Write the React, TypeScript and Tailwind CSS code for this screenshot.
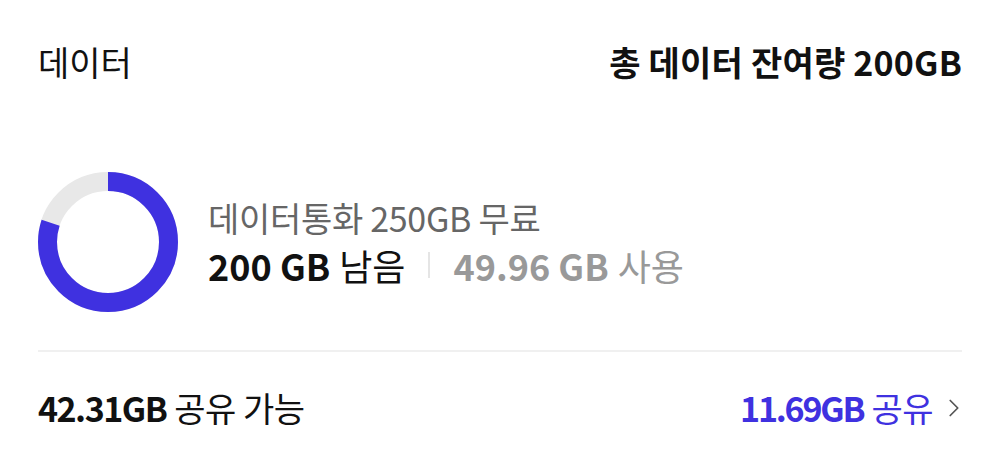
import { ChevronRight } from "lucide-react";

const font = { fontFamily: '"Noto Sans CJK KR", "Noto Sans", sans-serif' };

function Donut({ used, total }: { used: number; total: number }) {
  const r = 60.5;
  const c = 2 * Math.PI * r;
  const remain = (total - used) / total;
  return (
    <svg width="140" height="140" viewBox="0 0 140 140" className="shrink-0">
      <circle cx="70" cy="70" r={r} fill="none" stroke="#e8e8e8" strokeWidth="19" />
      <circle
        cx="70"
        cy="70"
        r={r}
        fill="none"
        stroke="#3f31e0"
        strokeWidth="19"
        strokeDasharray={`${c * remain} ${c}`}
        transform="rotate(-90 70 70)"
      />
    </svg>
  );
}

export default function App() {
  return (
    <div className="w-[1000px] h-[470px] bg-white px-[38px] text-[#111]" style={font}>
      <div className="flex items-center justify-between pt-[32px] h-[92px]">
        <div className="text-[34px] leading-none">데이터</div>
        <div className="text-[34px] font-bold leading-none tracking-[0.2px]">총 데이터 잔여량 200GB</div>
      </div>

      <div className="flex items-center mt-[80px] h-[140px]">
        <Donut used={49.96} total={250} />
        <div className="ml-[30px] flex flex-col gap-[12px]">
          <div className="text-[34px] leading-none text-[#666] tracking-[-0.3px]">데이터통화 250GB 무료</div>
          <div className="flex items-center text-[36px] leading-none">
            <span className="font-bold">200 GB</span>
            <span className="ml-[9px]">남음</span>
            <span className="mx-[23px] h-[26px] w-[2px] bg-[#e5e5e5]" />
            <span className="font-bold text-[#999]">49.96 GB</span>
            <span className="ml-[9px] text-[#999]">사용</span>
          </div>
        </div>
      </div>

      <div className="mt-[38px] h-[2px] bg-[#f0f0f0]" />

      <div className="flex items-center justify-between h-[112px]">
        <div className="text-[34px] leading-none">
          <span className="font-bold tracking-[-1.5px]">42.31GB</span>
          <span className="ml-[8px] tracking-[-0.5px]">공유 가능</span>
        </div>
        <div className="flex items-center text-[34px] leading-none text-[#3f31e0]">
          <span className="font-bold tracking-[-2.2px]">11.69GB</span>
          <span className="ml-[8px] tracking-[-0.5px]">공유</span>
          <ChevronRight className="ml-[6px] -mr-[7px] text-[#555]" size={30} strokeWidth={1.4} />
        </div>
      </div>
    </div>
  );
}
